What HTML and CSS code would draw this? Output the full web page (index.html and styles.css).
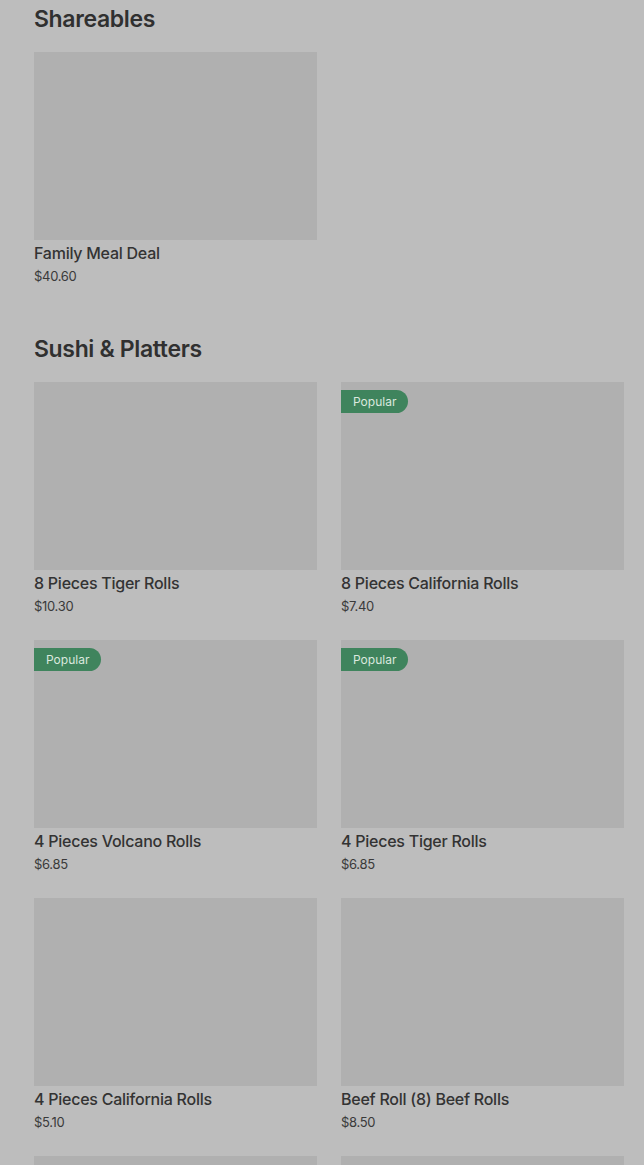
FILE: index.html
```html
<!DOCTYPE html>
<html lang="en">
<head>
<meta charset="utf-8">
<title>Menu</title>
<link rel="stylesheet" href="styles.css">
</head>
<body>
<main class="menu">
  <section class="section">
    <h2 class="section-title">Shareables</h2>
    <div class="grid">
      <div class="card">
        <div class="card-img"></div>
        <div class="card-name">Family Meal Deal</div>
        <div class="card-price">$40.60</div>
      </div>
    </div>
  </section>
  <section class="section">
    <h2 class="section-title">Sushi &amp; Platters</h2>
    <div class="grid">
      <div class="card">
        <div class="card-img"></div>
        <div class="card-name">8 Pieces Tiger Rolls</div>
        <div class="card-price">$10.30</div>
      </div>
      <div class="card">
        <div class="card-img"><span class="badge">Popular</span></div>
        <div class="card-name">8 Pieces California Rolls</div>
        <div class="card-price">$7.40</div>
      </div>
      <div class="card">
        <div class="card-img"><span class="badge">Popular</span></div>
        <div class="card-name">4 Pieces Volcano Rolls</div>
        <div class="card-price">$6.85</div>
      </div>
      <div class="card">
        <div class="card-img"><span class="badge">Popular</span></div>
        <div class="card-name">4 Pieces Tiger Rolls</div>
        <div class="card-price">$6.85</div>
      </div>
      <div class="card">
        <div class="card-img"></div>
        <div class="card-name">4 Pieces California Rolls</div>
        <div class="card-price">$5.10</div>
      </div>
      <div class="card">
        <div class="card-img"></div>
        <div class="card-name">Beef Roll (8) Beef Rolls</div>
        <div class="card-price">$8.50</div>
      </div>
      <div class="card">
        <div class="card-img"></div>
        <div class="card-name">&nbsp;</div>
        <div class="card-price">&nbsp;</div>
      </div>
      <div class="card">
        <div class="card-img"></div>
        <div class="card-name">&nbsp;</div>
        <div class="card-price">&nbsp;</div>
      </div>
    </div>
  </section>
</main>
</body>
</html>
```
FILE: styles.css
```css
html, body {
  margin: 0;
  padding: 0;
  background: #bdbdbd;
  height: 1165px;
  overflow: hidden;
}
body {
  font-family: Inter, "Noto Sans", "Liberation Sans", sans-serif;
  color: #333333;
}
.menu {
  padding: 5px 20px 0 34px;
}
.section {
  margin-bottom: 49px;
}
.section-title {
  margin: 0 0 19px;
  font-size: 23px;
  line-height: 28px;
  font-weight: 600;
  letter-spacing: -0.35px;
  color: #303030;
}
.grid {
  display: grid;
  grid-template-columns: 283px 283px;
  column-gap: 24px;
  row-gap: 24px;
}
.card-img {
  position: relative;
  height: 188px;
  background: #b0b0b0;
}
.badge {
  position: absolute;
  top: 8px;
  left: 0;
  height: 23px;
  padding: 0 12px;
  display: flex;
  align-items: center;
  background: #3f845d;
  color: #dbe8df;
  font-size: 12px;
  border-radius: 0 12px 12px 0;
}
.card-name {
  margin-top: 2px;
  font-size: 16px;
  line-height: 22px;
  font-weight: 500;
  letter-spacing: -0.25px;
}
.card-price {
  margin-top: 2px;
  font-size: 13px;
  line-height: 20px;
  color: #3a3a3a;
  letter-spacing: -0.3px;
}
```
